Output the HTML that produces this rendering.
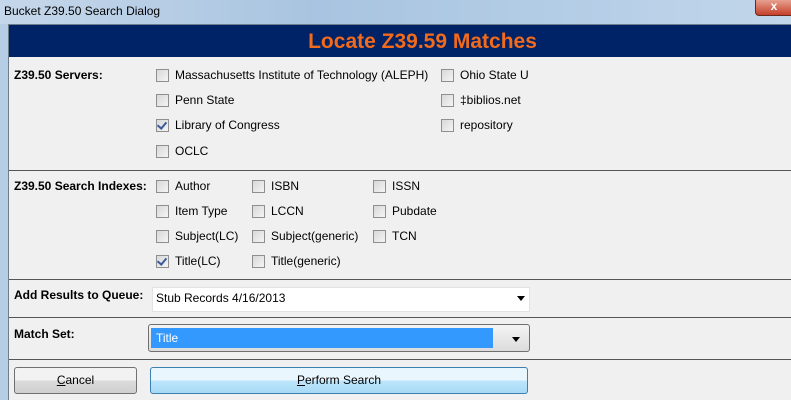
<!DOCTYPE html>
<html><head><meta charset="utf-8"><style>
body{margin:0;width:791px;height:400px;overflow:hidden;position:relative;font-family:"Liberation Sans",sans-serif;font-size:12px;color:#000;background:#f0f0f0}
.a{position:absolute}
.cb{position:absolute;width:11px;height:11px;border:1px solid #8f8f8f;background:linear-gradient(135deg,#d8d8d8,#f4f4f4);}
.cb.c::after{content:"";position:absolute;left:2px;top:0px;width:4px;height:7px;border:solid #3a5a9a;border-width:0 2px 2px 0;transform:rotate(40deg)}
.l{position:absolute;white-space:nowrap}
.b{font-weight:bold}
.sep{position:absolute;left:9px;right:0;height:1px;background:#555}
</style></head><body>
<div class="a" style="left:0;top:0;width:791px;height:24px;background:linear-gradient(90deg,#c5d7ea,#a9c4e0 40%,#b3cde6 70%,#c2d6ea)"></div>
<div class="l" style="left:4px;top:4px;font-size:12px">Bucket Z39.50 Search Dialog</div>
<div class="a" style="left:755px;top:0;width:36px;height:15px;background:linear-gradient(#e8a090,#c4402a);border:1px solid #6a2a20;border-top:none;border-radius:0 0 0 4px;color:#fff;font-weight:bold;text-align:center;line-height:13px;font-size:12px">x</div>
<div class="a" style="left:0;top:24px;width:8px;height:376px;background:#b6cde6"></div>
<div class="a" style="left:8px;top:24px;width:1px;height:376px;background:#6e7d8c"></div>
<div class="a" style="left:9px;top:24px;right:0;height:1px;background:#6e7d8c"></div>
<div class="a" style="left:9px;top:25px;right:0;height:32px;background:#002266"></div>
<div class="l b" style="left:9px;right:0;top:30px;text-align:center;color:#f26a1b;font-size:21px;padding-left:45px">Locate Z39.59 Matches</div>

<div class="l b" style="left:14px;top:68px">Z39.50 Servers:</div>
<div class="cb" style="left:156px;top:69px"></div><div class="l" style="left:175px;top:68px">Massachusetts Institute of Technology (ALEPH)</div>
<div class="cb" style="left:441px;top:69px"></div><div class="l" style="left:460px;top:68px">Ohio State U</div>
<div class="cb" style="left:156px;top:94px"></div><div class="l" style="left:175px;top:93px">Penn State</div>
<div class="cb" style="left:441px;top:94px"></div><div class="l" style="left:460px;top:93px">‡biblios.net</div>
<div class="cb c" style="left:156px;top:119px"></div><div class="l" style="left:175px;top:118px">Library of Congress</div>
<div class="cb" style="left:441px;top:119px"></div><div class="l" style="left:460px;top:118px">repository</div>
<div class="cb" style="left:156px;top:145px"></div><div class="l" style="left:175px;top:144px">OCLC</div>
<div class="sep" style="top:170px"></div>

<div class="l b" style="left:14px;top:179px">Z39.50 Search Indexes:</div>
<div class="cb" style="left:156px;top:180px"></div><div class="l" style="left:175px;top:179px">Author</div>
<div class="cb" style="left:252px;top:180px"></div><div class="l" style="left:271px;top:179px">ISBN</div>
<div class="cb" style="left:373px;top:180px"></div><div class="l" style="left:392px;top:179px">ISSN</div>
<div class="cb" style="left:156px;top:205px"></div><div class="l" style="left:175px;top:204px">Item Type</div>
<div class="cb" style="left:252px;top:205px"></div><div class="l" style="left:271px;top:204px">LCCN</div>
<div class="cb" style="left:373px;top:205px"></div><div class="l" style="left:392px;top:204px">Pubdate</div>
<div class="cb" style="left:156px;top:230px"></div><div class="l" style="left:175px;top:229px">Subject(LC)</div>
<div class="cb" style="left:252px;top:230px"></div><div class="l" style="left:271px;top:229px">Subject(generic)</div>
<div class="cb" style="left:373px;top:230px"></div><div class="l" style="left:392px;top:229px">TCN</div>
<div class="cb c" style="left:156px;top:255px"></div><div class="l" style="left:175px;top:254px">Title(LC)</div>
<div class="cb" style="left:252px;top:255px"></div><div class="l" style="left:271px;top:254px">Title(generic)</div>
<div class="sep" style="top:279px"></div>

<div class="l b" style="left:14px;top:288px">Add Results to Queue:</div>
<div class="a" style="left:152px;top:287px;width:376px;height:23px;background:#fff;border:1px solid #e2e2e2"></div>
<div class="l" style="left:156px;top:291px">Stub Records 4/16/2013</div>
<div class="a" style="left:517px;top:296px;width:0;height:0;border:4px solid transparent;border-top:5px solid #000;border-bottom:0"></div>
<div class="sep" style="top:317px"></div>

<div class="l b" style="left:14px;top:327px">Match Set:</div>
<div class="a" style="left:148px;top:324px;width:380px;height:26px;border:1px solid #707070;border-radius:3px;background:linear-gradient(#f4f4f4,#dcdcdc)"></div>
<div class="a" style="left:151px;top:328px;width:342px;height:20px;background:#3399ff"></div>
<div class="l" style="left:156px;top:331px;color:#fff">Title</div>
<div class="a" style="left:512px;top:337px;width:0;height:0;border:4px solid transparent;border-top:5px solid #000;border-bottom:0"></div>
<div class="sep" style="top:359px"></div>

<div class="a" style="left:14px;top:367px;width:121px;height:25px;border:1px solid #707070;border-radius:3px;background:linear-gradient(#f2f2f2 50%,#dcdcdc 50%,#cfcfcf);text-align:center;line-height:25px"><u>C</u>ancel</div>
<div class="a" style="left:150px;top:367px;width:376px;height:25px;border:1px solid #3c7fb1;border-radius:3px;background:linear-gradient(#eaf6fd 50%,#bee6fd 50%,#a7d9f5);text-align:center;line-height:25px"><u>P</u>erform Search</div>
</body></html>
